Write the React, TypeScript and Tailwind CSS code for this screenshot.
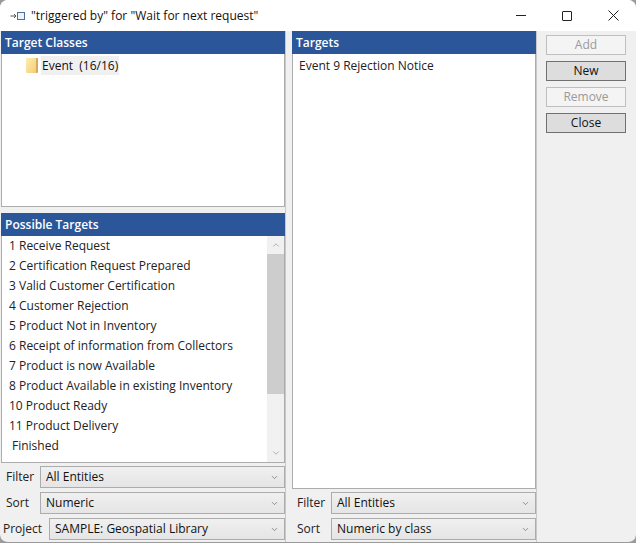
import { ChevronDown, ChevronUp } from "lucide-react";

const possibleTargets = [
  "1 Receive Request",
  "2 Certification Request Prepared",
  "3 Valid Customer Certification",
  "4 Customer Rejection",
  "5 Product Not in Inventory",
  "6 Receipt of information from Collectors",
  "7 Product is now Available",
  "8 Product Available in existing Inventory",
  "10 Product Ready",
  "11 Product Delivery",
];

function Header({ title }: { title: string }) {
  return (
    <div className="flex items-center h-[23px] px-[4px] bg-[#2b579a] font-semibold text-[12px] text-white shrink-0">
      {title}
    </div>
  );
}

function Combo({ label, value, labelWidth, width }: { label: string; value: string; labelWidth: string; width: string }) {
  return (
    <div className="flex items-center h-[22px]">
      <span className={`${labelWidth} shrink-0 text-[12px] text-[#222]`}>{label}</span>
      <div className={`flex items-center justify-between ${width} h-[22px] pl-[5px] pr-[5px] border border-[#acacac] bg-gradient-to-b from-[#f0f0f0] to-[#e5e5e5] text-[12px] text-[#111]`}>
        <span>{value}</span>
        <ChevronDown size={9} strokeWidth={1.6} className="text-[#555]" />
      </div>
    </div>
  );
}

function ActionButton({ label, enabled }: { label: string; enabled?: boolean }) {
  return (
    <div
      className={`flex items-center justify-center w-[80px] h-[20px] border text-[12px] ${
        enabled ? "border-[#707070] bg-[#dddddd] text-[#111]" : "border-[#bfbfbf] bg-[#f4f4f4] text-[#9a9a9a]"
      }`}
    >
      {label}
    </div>
  );
}

export default function App() {
  return (
    <div className="w-[636px] h-[543px] bg-[#9a9a9a] overflow-hidden" style={{ fontFamily: '"Open Sans", "Noto Sans", sans-serif' }}>
      <div className="flex flex-col w-full h-full rounded-[8px] overflow-hidden bg-[#f0f0f0] border-b border-[#9a9a9a]">
        {/* Title bar */}
        <div className="flex items-center h-[31px] pl-[10px] bg-white shrink-0">
          <svg width="15" height="10" viewBox="0 0 15 10" fill="none" className="shrink-0">
            <path d="M0.5 5H6M4 3L6 5L4 7" stroke="#555" strokeWidth="1" />
            <rect x="7.5" y="1.5" width="7" height="7" stroke="#4d6f9c" strokeWidth="1" fill="#eef3f8" />
          </svg>
          <span className="ml-[6px] text-[12px] text-[#111]">"triggered by" for "Wait for next request"</span>
          <div className="flex items-center ml-auto">
            <div className="flex items-center justify-center w-[46px] h-[31px]">
              <div className="w-[10px] h-px bg-[#222]" />
            </div>
            <div className="flex items-center justify-center w-[46px] h-[31px]">
              <div className="w-[10px] h-[10px] border border-[#222] rounded-[1px]" />
            </div>
            <div className="flex items-center justify-center w-[46px] h-[31px]">
              <svg width="11" height="11" viewBox="0 0 11 11" stroke="#222" strokeWidth="1">
                <path d="M0.5 0.5L10.5 10.5M10.5 0.5L0.5 10.5" />
              </svg>
            </div>
          </div>
        </div>

        <div className="flex flex-1 min-h-0">
          {/* Left column */}
          <div className="flex flex-col w-[286px] pl-[1px] shrink-0 border-r border-[#c8c8c8]">
            <Header title="Target Classes" />
            <div className="flex items-start h-[153px] pl-[24px] pt-[2px] bg-white border border-t-0 border-[#acacac]">
              <div className="w-[12px] h-[15px] mt-[2px] rounded-[1px] border-r-2 border-[#d9a860] bg-gradient-to-br from-[#fdeeb0] to-[#f5cd75]" />
              <span className="ml-[3px] px-[1px] h-[19px] leading-[19px] bg-[#f0f0f0] text-[12px] text-[#111] whitespace-pre">Event  (16/16)</span>
            </div>
            <div className="h-[6px] shrink-0" />
            <Header title="Possible Targets" />
            <div className="flex h-[227px] bg-white border border-t-0 border-[#acacac]">
              <div className="flex flex-col flex-1 pl-[7px] text-[12px] text-[#222]">
                {possibleTargets.map((t) => (
                  <div key={t} className="flex items-center h-[20px] shrink-0 mt-0">
                    {t}
                  </div>
                ))}
                <div className="flex items-center h-[20px] pl-[3px]">Finished</div>
              </div>
              <div className="flex flex-col items-center w-[17px] bg-[#f1f1f1] shrink-0">
                <div className="flex items-center justify-center h-[18px] shrink-0">
                  <ChevronUp size={10} strokeWidth={2} className="text-[#a3a3a3]" />
                </div>
                <div className="w-full h-[140px] bg-[#cdcdcd]" />
                <div className="flex items-center justify-center h-[18px] mt-auto">
                  <ChevronDown size={10} strokeWidth={2} className="text-[#a3a3a3]" />
                </div>
              </div>
            </div>
            <div className="flex flex-col gap-[4px] pt-[3px] pl-[2px]">
              <div className="pl-[3px]">
                <Combo label="Filter" value="All Entities" labelWidth="w-[34px]" width="w-[245px]" />
              </div>
              <div className="pl-[3px]">
                <Combo label="Sort" value="Numeric" labelWidth="w-[34px]" width="w-[245px]" />
              </div>
              <Combo label="Project" value="SAMPLE: Geospatial Library" labelWidth="w-[46px]" width="w-[236px]" />
            </div>
          </div>

          {/* Right column */}
          <div className="flex flex-col w-[245px] ml-[6px] shrink-0 border-r border-[#c8c8c8]">
            <Header title="Targets" />
            <div className="h-[435px] pl-[6px] pt-[3px] bg-white border border-t-0 border-[#acacac] text-[12px] text-[#222]">
              Event 9 Rejection Notice
            </div>
            <div className="flex flex-col gap-[4px] pt-[3px] pl-[5px]">
              <Combo label="Filter" value="All Entities" labelWidth="w-[34px]" width="w-[205px]" />
              <Combo label="Sort" value="Numeric by class" labelWidth="w-[34px]" width="w-[205px]" />
            </div>
          </div>

          {/* Buttons */}
          <div className="flex flex-col gap-[6px] pt-[4px] pl-[9px]">
            <ActionButton label="Add" />
            <ActionButton label="New" enabled />
            <ActionButton label="Remove" />
            <ActionButton label="Close" enabled />
          </div>
        </div>
      </div>
    </div>
  );
}
